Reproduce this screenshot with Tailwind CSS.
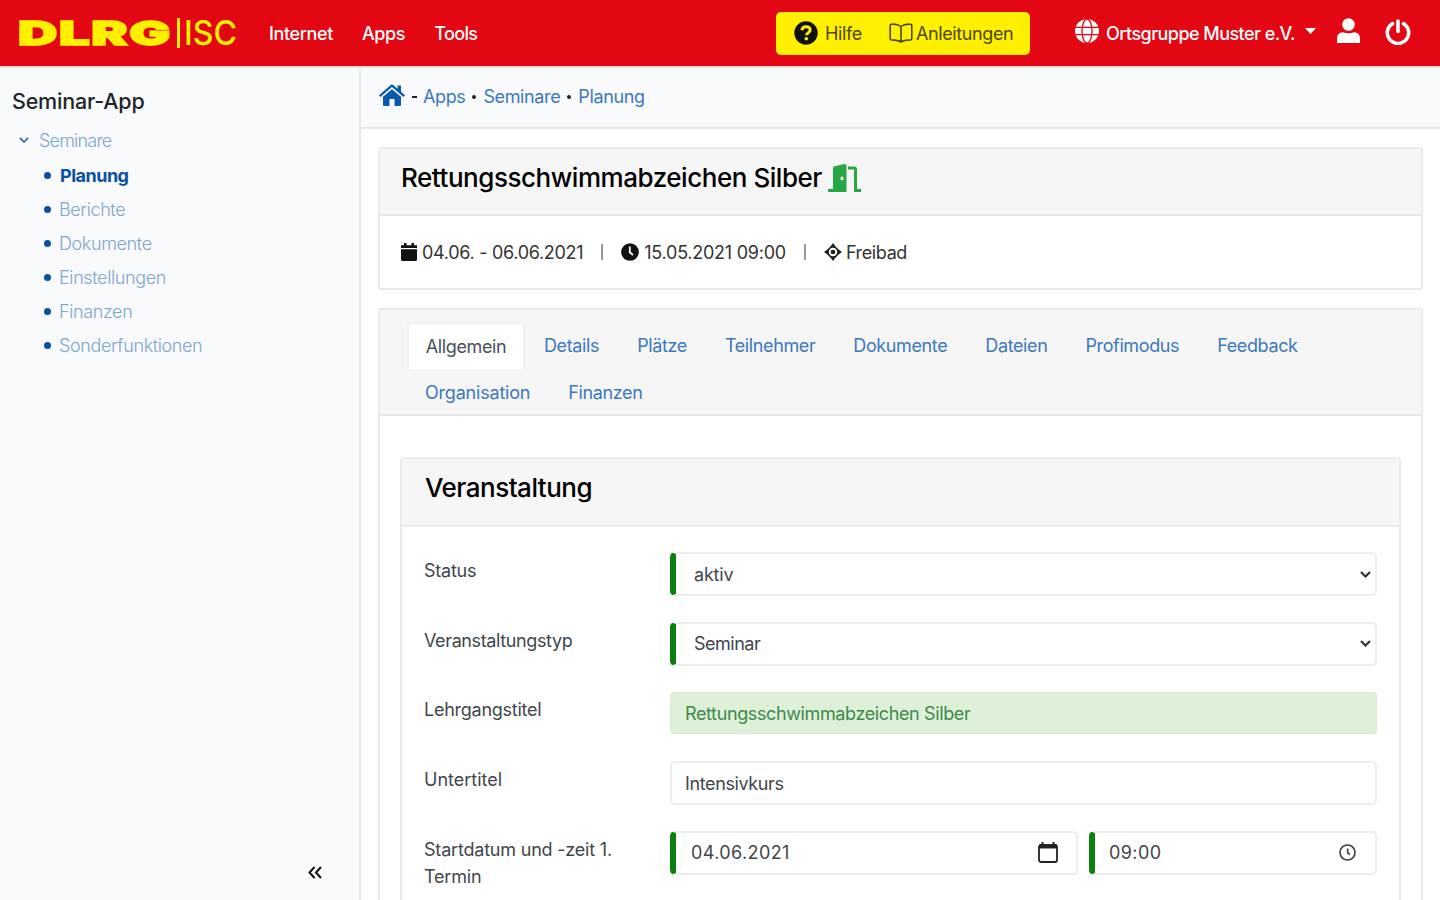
<!DOCTYPE html>
<html lang="de">
<head>
  <meta charset="UTF-8">
  <title>Seminar-App</title>
  <script src="https://cdn.jsdelivr.net/npm/@tailwindcss/browser@4"></script>
</head>
<body class="h-screen overflow-hidden bg-white font-['Inter',sans-serif] text-[18px] tracking-[-0.38px] text-[#212529] flex flex-col">

  <!-- Top bar -->
  <header class="h-[66px] shrink-0 bg-[#e30613] flex items-center text-white font-medium pl-[17px] pr-[29px]">
    <svg class="w-[222px] h-[56px] shrink-0 tracking-normal" viewBox="0 0 222 56" fill="#fff000">
      <text x="1" y="39.500" font-family="Inter" font-weight="900" font-size="33" stroke="#fff000" stroke-width="1.500" letter-spacing="1" textLength="154" lengthAdjust="spacingAndGlyphs">DLRG</text>
      <rect x="160" y="13" width="3" height="30"/>
      <text x="167" y="40" font-family="Inter" font-weight="500" font-size="34.500" textLength="53" lengthAdjust="spacingAndGlyphs">ISC</text>
    </svg>
    <nav class="flex gap-[29px] ml-[30px]">
      <a href="#">Internet</a>
      <a href="#">Apps</a>
      <a href="#" class="tracking-[-0.6px]">Tools</a>
    </nav>
    <div class="ml-auto h-[43px] w-[254px] rounded-[5px] bg-[#fff000] text-[#4d4700] font-normal flex items-center pl-[18px]">
      <svg class="size-[24px]" viewBox="0 0 24 24">
        <circle cx="12" cy="12" r="11.7" fill="#111100"/>
        <path d="M7.800 9.200C8.100 6.800 9.800 5.800 12 5.800c2.400 0 4.200 1.300 4.200 3.300 0 2.700-3.700 2.600-3.700 5.100" fill="none" stroke="#fff000" stroke-width="2.900"/>
        <circle cx="12.300" cy="17.800" r="1.800" fill="#fff000"/>
      </svg>
      <span class="ml-[7px]">Hilfe</span>
      <svg class="w-[24px] h-[20px] ml-[27px]" viewBox="0 0 24 20" fill="none" stroke="#4d4700" stroke-width="1.600">
        <path d="M12 3.500C9.500 1.500 5.500 1 2.500 1.200Q1.200 1.300 1.200 2.500V15.500Q1.200 16.800 2.500 16.900C6 17 9.500 17.300 12 19C14.500 17.300 18 17 21.500 16.900Q22.800 16.800 22.800 15.500V2.500Q22.800 1.300 21.500 1.200C18.500 1 14.500 1.500 12 3.500ZM12 3.500V19"/>
      </svg>
      <span class="ml-[3px]">Anleitungen</span>
    </div>
    <div class="flex items-center ml-[45px]">
      <svg class="size-[24px] -mt-1" viewBox="0 0 24 24" stroke="#e30613" stroke-width="1.300" fill="none">
        <circle cx="12" cy="12" r="12" fill="#fff" stroke="none"/>
        <ellipse cx="12" cy="12" rx="5" ry="12"/>
        <path d="M0 8.300H24M0 15.700H24"/>
      </svg>
      <span class="ml-[7px] tracking-[-0.55px] whitespace-nowrap">Ortsgruppe Muster e.V.</span>
      <svg class="w-[11px] h-[6px] ml-[10px] -mt-1" viewBox="0 0 11 6" fill="#fff"><path d="M0 0H11L5.500 6Z"/></svg>
      <svg class="w-[23px] h-[25px] ml-[21px] -mt-1.5" viewBox="0 0 23 25" fill="#fff">
        <circle cx="11.500" cy="6.500" r="6.300"/>
        <path d="M0 25V20.500Q0 14.500 6 14.200Q11.500 16.500 17 14.200Q23 14.500 23 20.500V25Z"/>
      </svg>
      <svg class="size-[26px] ml-[25px] -mt-0.5" viewBox="0 0 26 26" fill="none" stroke="#fff" stroke-width="3.600">
        <path d="M7.500 4.600A10.700 10.700 0 1 0 18.500 4.600M13 2V12.500" stroke-linecap="round"/>
      </svg>
    </div>
  </header>

  <div class="flex grow min-h-0 border-t-2 border-[#fbdadc]">
    <!-- Sidebar -->
    <aside class="w-[361px] shrink-0 border-r-2 border-[#e6e8ea] bg-[#f8fafc] flex flex-col">
      <h1 class="text-[21.5px] leading-[26px] mt-[20px] ml-[12px] font-medium tracking-[-0.2px]">Seminar-App</h1>
      <div class="flex items-center mt-[13px] ml-[19px] h-[27px] font-light text-[#7fa5d0]">
        <svg class="w-[10px] h-[7px]" viewBox="0 0 10 7" fill="none" stroke="#3c74b6" stroke-width="1.800"><path d="M1 1L5 5L9 1"/></svg>
        <span class="ml-[10px] tracking-[-0.8px]">Seminare</span>
      </div>
      <ul class="mt-[4px] ml-[44px] font-light text-[#7fa5d0]">
        <li class="h-[34px] flex items-center gap-[9px] font-bold tracking-[-0.5px] text-[#0a50a1]"><i class="size-[7px] rounded-full bg-[#0a50a1]"></i>Planung</li>
        <li class="h-[34px] flex items-center gap-[8px]"><i class="size-[7px] rounded-full bg-[#0a50a1]"></i>Berichte</li>
        <li class="h-[34px] flex items-center gap-[8px]"><i class="size-[7px] rounded-full bg-[#0a50a1]"></i>Dokumente</li>
        <li class="h-[34px] flex items-center gap-[8px]"><i class="size-[7px] rounded-full bg-[#0a50a1]"></i>Einstellungen</li>
        <li class="h-[34px] flex items-center gap-[8px]"><i class="size-[7px] rounded-full bg-[#0a50a1]"></i>Finanzen</li>
        <li class="h-[34px] flex items-center gap-[8px]"><i class="size-[7px] rounded-full bg-[#0a50a1]"></i>Sonderfunktionen</li>
      </ul>
      <svg class="w-[14px] h-[13px] mt-auto mb-[21px] ml-[308px]" viewBox="0 0 14 13" fill="none" stroke="#111" stroke-width="2"><path d="M6.500 1L1.500 6.500L6.500 12M13 1L8 6.500L13 12"/></svg>
    </aside>

    <main class="grow min-w-0 flex flex-col">
      <!-- Breadcrumb -->
      <div class="h-[61px] shrink-0 border-b-2 border-[#e6e8ea] bg-[#f8fafc] flex items-center pl-[18px] pb-[2px] text-[#3c78bd]">
        <svg class="w-[26px] h-[22px] -mt-1" viewBox="0 0 26 22" fill="#0a58ab">
          <path d="M0 11.200L11.800 1Q13 0 14.200 1L18.500 4.700V1.500H22V7.700L26 11.200L24.600 12.900L13 3L1.400 12.900Z"/>
          <path d="M4 12.800L13 5.200L22 12.800V21Q22 22 21 22H15.500V15H10.500V22H5Q4 22 4 21Z"/>
        </svg>
        <i class="w-[5px] h-[2px] bg-[#222] ml-[7px] mr-[6px]"></i>
        <a href="#">Apps</a>
        <i class="size-[4px] rounded-full bg-[#222] mx-[7px]"></i>
        <a href="#">Seminare</a>
        <i class="size-[4px] rounded-full bg-[#222] mx-[7px]"></i>
        <a href="#">Planung</a>
      </div>

      <div class="px-[17px] pt-[18px] grow min-h-0 flex flex-col">
        <!-- Seminar summary -->
        <section class="shrink-0 border-2 border-[#ebebeb] rounded-[3px]">
          <div class="h-[67px] bg-[#f6f6f6] border-b-2 border-[#e6e6e6] flex items-center pl-[21px] pb-[8px]">
            <h2 class="text-[26px] font-medium text-black tracking-[-0.46px]">Rettungsschwimmabzeichen Silber</h2>
            <svg class="w-[33px] h-[28px] ml-[6px]" viewBox="0 0 33 28" fill="#28a745">
              <path d="M0 25H5V4Q5 2.700 6.500 2.300L16.500 0Q18.500 0 18.500 2V28H0ZM14 12.500A1.600 1.900 0 1 0 14 16.300A1.600 1.900 0 1 0 14 12.500Z" fill-rule="evenodd"/>
              <path d="M20 4H26Q27.500 4 27.500 5.500V26.500H33" fill="none" stroke="#28a745" stroke-width="3"/>
            </svg>
          </div>
          <div class="h-[72px] flex items-center pl-[21px] text-[#333]">
            <svg class="w-[16px] h-[18px]" viewBox="0 0 16 18" fill="#111"><path d="M3 0H5.500V2.200H10.500V0H13V2.200H16V5H0V2.200H3ZM0 6.200H16V16.500Q16 18 14.500 18H1.500Q0 18 0 16.500Z"/></svg>
            <span class="ml-[5px] tracking-[-0.3px]">04.06. - 06.06.2021</span>
            <i class="w-[2px] h-[16px] bg-[#999] mx-[18px]"></i>
            <svg class="size-[18px]" viewBox="0 0 18 18"><circle cx="9" cy="9" r="8.800" fill="#111"/><path d="M8.800 3.500V9.300L12 12" fill="none" stroke="#fff" stroke-width="1.800"/></svg>
            <span class="ml-[5px] tracking-[-0.25px]">15.05.2021 09:00</span>
            <i class="w-[2px] h-[16px] bg-[#999] mx-[18px]"></i>
            <svg class="size-[18px]" viewBox="0 0 18 18"><path d="M9 0L12 4H6ZM9 18L6 14H12ZM0 9L4 6V12ZM18 9L14 12V6Z" fill="#222"/><circle cx="9" cy="9" r="5" fill="none" stroke="#222" stroke-width="1.700"/><circle cx="9" cy="9" r="2.300" fill="#222"/></svg>
            <span class="ml-[4px]">Freibad</span>
          </div>
        </section>

        <!-- Tabs and form -->
        <section class="mt-[18px] grow min-h-0 overflow-hidden border-2 border-b-0 border-[#ebebeb] rounded-t-[3px] flex flex-col">
          <div class="h-[106px] shrink-0 bg-[#f6f6f6] border-b-2 border-[#e6e6e6] pl-[27px] pt-[12px] text-[#3c78bd]">
            <div class="flex h-[47px] items-center">
              <a href="#" class="h-full w-[118px] border-2 border-b-0 border-[#f0f0f0] bg-white text-[#495057] flex items-center justify-center rounded-t-[3px]">Allgemein</a>
              <a href="#" class="ml-[19px]">Details</a>
              <a href="#" class="ml-[38px]">Plätze</a>
              <a href="#" class="ml-[38px]">Teilnehmer</a>
              <a href="#" class="ml-[38px]">Dokumente</a>
              <a href="#" class="ml-[38px]">Dateien</a>
              <a href="#" class="ml-[38px]">Profimodus</a>
              <a href="#" class="ml-[38px]">Feedback</a>
            </div>
            <div class="flex h-[46px] items-center pl-[18px]">
              <a href="#" class="tracking-[-0.2px]">Organisation</a>
              <a href="#" class="ml-[38px]">Finanzen</a>
            </div>
          </div>

          <div class="mx-[20px] mt-[41px] grow min-h-0 border-2 border-b-0 border-[#ebebeb] rounded-t-[4px]">
            <div class="h-[68px] bg-[#f6f6f6] border-b-2 border-[#ebebeb] pl-[23px] pb-[10px] flex items-center">
              <h3 class="text-[26px] font-medium text-black tracking-[-0.5px]">Veranstaltung</h3>
            </div>
            <div class="pl-[22px] pr-[22px] pt-[25px] flex flex-col gap-[25.7px] text-[#40464c]">
              <div class="flex h-[44px]">
                <label class="w-[246px] shrink-0 pt-[5px] leading-[27px] tracking-[-0.25px]">Status</label>
                <div class="grow border-2 border-[#ebedee] border-l-[6px] border-l-[#0b800f] rounded-[5px] flex items-center pl-[18px] pr-[4px]">
                  <span class="tracking-[-0.2px]">aktiv</span>
                  <svg class="w-[11px] h-[7px] ml-auto" viewBox="0 0 11 7" fill="none" stroke="#333" stroke-width="2.200"><path d="M1 1L5.500 5.500L10 1"/></svg>
                </div>
              </div>
              <div class="flex h-[44px]">
                <label class="w-[246px] shrink-0 pt-[5px] leading-[27px]">Veranstaltungstyp</label>
                <div class="grow border-2 border-[#ebedee] border-l-[6px] border-l-[#0b800f] rounded-[5px] flex items-center pl-[18px] pr-[4px]">
                  <span class="tracking-[-0.5px]">Seminar</span>
                  <svg class="w-[11px] h-[7px] ml-auto" viewBox="0 0 11 7" fill="none" stroke="#333" stroke-width="2.200"><path d="M1 1L5.500 5.500L10 1"/></svg>
                </div>
              </div>
              <div class="flex h-[44px]">
                <label class="w-[246px] shrink-0 pt-[5px] leading-[27px] tracking-[-0.25px]">Lehrgangstitel</label>
                <div class="grow my-px border border-[#d9ecd0] bg-[#dff0d8] text-[#3c8a4c] rounded-[4px] flex items-center pl-[14px]">Rettungsschwimmabzeichen Silber</div>
              </div>
              <div class="flex h-[44px]">
                <label class="w-[246px] shrink-0 pt-[5px] leading-[27px] tracking-normal">Untertitel</label>
                <div class="grow border-2 border-[#ebedee] rounded-[5px] flex items-center pl-[13px]">Intensivkurs</div>
              </div>
              <div class="flex h-[44px]">
                <label class="w-[246px] shrink-0 pt-[5px] leading-[27px] tracking-[-0.2px]">Startdatum und -zeit 1.<br>Termin</label>
                <div class="w-[408px] border-2 border-[#ebedee] border-l-[6px] border-l-[#0b800f] rounded-[5px] flex items-center pl-[15px] pr-[18px]">
                  <span class="tracking-[0.4px]">04.06.2021</span>
                  <svg class="w-[20px] h-[21px] ml-auto" viewBox="0 0 20 21" fill="none" stroke="#222"><rect x="1" y="3" width="18" height="17" rx="2" stroke-width="1.800"/><path d="M1 4.500H19" stroke-width="4"/><path d="M4.500 0V3M15.500 0V3" stroke-width="2"/></svg>
                </div>
                <div class="grow ml-[11px] border-2 border-[#ebedee] border-l-[6px] border-l-[#0b800f] rounded-[5px] flex items-center pl-[14px] pr-[19px]">
                  <span class="tracking-[0.4px]">09:00</span>
                  <svg class="size-[17px] ml-auto" viewBox="0 0 17 17" fill="none" stroke="#444" stroke-width="1.700"><circle cx="8.500" cy="8.500" r="7.500"/><path d="M8.700 4.500V9L11 10.500"/></svg>
                </div>
              </div>
            </div>
          </div>
        </section>
      </div>
    </main>
  </div>
</body>
</html>
